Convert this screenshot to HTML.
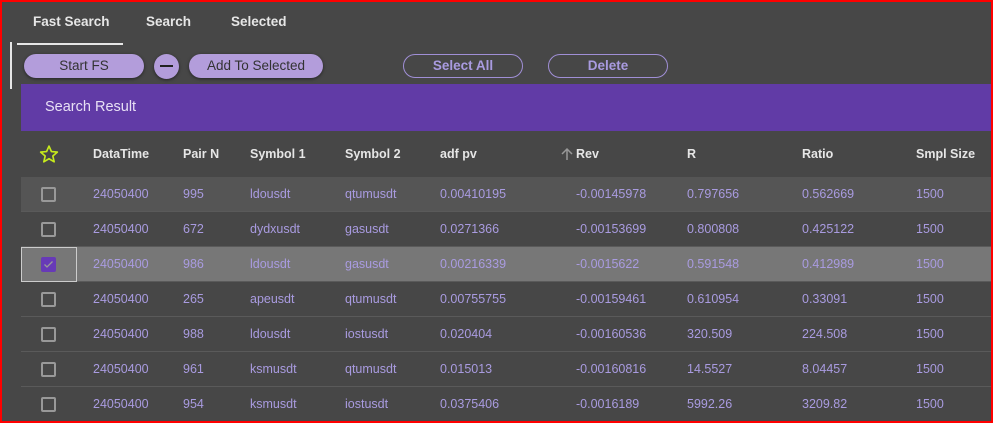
<!DOCTYPE html>
<html><head><style>
*{margin:0;padding:0;box-sizing:border-box}
body{width:993px;height:423px;overflow:hidden;background:#474747;font-family:"Liberation Sans",sans-serif;position:relative}
.frame{position:absolute;left:0;top:0;width:993px;height:423px;border:2px solid #f00;pointer-events:none;z-index:9}
.a{position:absolute}
.tab{position:absolute;top:14px;font-size:13.5px;font-weight:bold;color:#e6e6e6}
.btn{position:absolute;top:54px;height:24px;border-radius:12px;background:#b39ddb;color:#333;font-size:13.5px;text-align:center;line-height:24px;box-shadow:0 1px 3px rgba(0,0,0,.5)}
.obtn{position:absolute;top:54px;height:24px;border-radius:12px;border:1px solid #a08fd6;color:#a99be0;font-size:13.5px;font-weight:bold;text-align:center;line-height:22px}
.bar{position:absolute;left:21px;top:84px;width:972px;height:47px;background:#613ba6;color:#e8e0f5;font-size:14.5px;line-height:47px;padding-left:24px}
.row{position:absolute;left:21px;width:972px;height:35px;border-bottom:1px solid #5a5a5a;font-size:12.5px;color:#a99be0}
.row span,.hd span{position:absolute;top:0;line-height:35px}
.hd{position:absolute;left:21px;top:131px;width:972px;height:46px;font-size:12.5px;font-weight:bold;color:#e6e6e6}
.hd span{line-height:46px}
.cb{position:absolute;left:20px;top:10px;width:15px;height:15px;border:2px solid #999;border-radius:2px}
</style></head><body>
<div class="frame"></div>
<div class="tab" style="left:33px">Fast Search</div>
<div class="tab" style="left:146px">Search</div>
<div class="tab" style="left:231px">Selected</div>
<div class="a" style="left:17px;top:43px;width:106px;height:2px;background:#e6e6e6"></div>
<div class="a" style="left:10px;top:42px;width:2px;height:47px;background:#e6e6e6"></div>
<div class="btn" style="left:24px;width:120px">Start FS</div>
<div class="btn" style="left:154px;width:25px;border-radius:50%;height:25px"><div class="a" style="left:6px;top:11px;width:13px;height:2px;background:#222"></div></div>
<div class="btn" style="left:189px;width:134px">Add To Selected</div>
<div class="obtn" style="left:403px;width:120px">Select All</div>
<div class="obtn" style="left:548px;width:120px">Delete</div>
<div class="bar">Search Result</div>
<div class="hd">
<svg class="a" style="left:18px;top:13px" width="20" height="20" viewBox="0 0 24 24"><path d="M12 2.5l2.9 6.6 7.1.6-5.4 4.7 1.6 7-6.2-3.7-6.2 3.7 1.6-7L2 9.7l7.1-.6z" fill="none" stroke="#c6ea1c" stroke-width="2" stroke-linejoin="round"/></svg>
<svg class="a" style="left:539px;top:16px" width="14" height="14" viewBox="0 0 14 14"><path d="M7 13V2M2 7l5-5 5 5" fill="none" stroke="#999" stroke-width="1.5"/></svg>
<span style="left:72px">DataTime</span><span style="left:162px">Pair N</span><span style="left:229px">Symbol 1</span><span style="left:324px">Symbol 2</span><span style="left:419px">adf pv</span><span style="left:555px">Rev</span><span style="left:666px">R</span><span style="left:781px">Ratio</span><span style="left:895px">Smpl Size</span>
</div>
<div class="row" style="top:177px;background:#555"><div class="cb"></div><span style="left:72px">24050400</span><span style="left:162px">995</span><span style="left:229px">ldousdt</span><span style="left:324px">qtumusdt</span><span style="left:419px">0.00410195</span><span style="left:555px">-0.00145978</span><span style="left:666px">0.797656</span><span style="left:781px">0.562669</span><span style="left:895px">1500</span></div>
<div class="row" style="top:212px"><div class="cb"></div><span style="left:72px">24050400</span><span style="left:162px">672</span><span style="left:229px">dydxusdt</span><span style="left:324px">gasusdt</span><span style="left:419px">0.0271366</span><span style="left:555px">-0.00153699</span><span style="left:666px">0.800808</span><span style="left:781px">0.425122</span><span style="left:895px">1500</span></div>
<div class="row" style="top:247px;background:#777"><div class="a" style="left:0;top:0;width:56px;height:35px;border:1px solid #ccc"></div><div class="cb" style="background:#673ab7;border-color:#673ab7"><svg class="a" style="left:0;top:0" width="11" height="11" viewBox="0 0 11 11"><path d="M1.5 5.5l2.5 2.5L9.5 2.5" fill="none" stroke="#999" stroke-width="1.3"/></svg></div><span style="left:72px">24050400</span><span style="left:162px">986</span><span style="left:229px">ldousdt</span><span style="left:324px">gasusdt</span><span style="left:419px">0.00216339</span><span style="left:555px">-0.0015622</span><span style="left:666px">0.591548</span><span style="left:781px">0.412989</span><span style="left:895px">1500</span></div>
<div class="row" style="top:282px"><div class="cb"></div><span style="left:72px">24050400</span><span style="left:162px">265</span><span style="left:229px">apeusdt</span><span style="left:324px">qtumusdt</span><span style="left:419px">0.00755755</span><span style="left:555px">-0.00159461</span><span style="left:666px">0.610954</span><span style="left:781px">0.33091</span><span style="left:895px">1500</span></div>
<div class="row" style="top:317px"><div class="cb"></div><span style="left:72px">24050400</span><span style="left:162px">988</span><span style="left:229px">ldousdt</span><span style="left:324px">iostusdt</span><span style="left:419px">0.020404</span><span style="left:555px">-0.00160536</span><span style="left:666px">320.509</span><span style="left:781px">224.508</span><span style="left:895px">1500</span></div>
<div class="row" style="top:352px"><div class="cb"></div><span style="left:72px">24050400</span><span style="left:162px">961</span><span style="left:229px">ksmusdt</span><span style="left:324px">qtumusdt</span><span style="left:419px">0.015013</span><span style="left:555px">-0.00160816</span><span style="left:666px">14.5527</span><span style="left:781px">8.04457</span><span style="left:895px">1500</span></div>
<div class="row" style="top:387px;border:none"><div class="cb"></div><span style="left:72px">24050400</span><span style="left:162px">954</span><span style="left:229px">ksmusdt</span><span style="left:324px">iostusdt</span><span style="left:419px">0.0375406</span><span style="left:555px">-0.0016189</span><span style="left:666px">5992.26</span><span style="left:781px">3209.82</span><span style="left:895px">1500</span></div>
</body></html>
